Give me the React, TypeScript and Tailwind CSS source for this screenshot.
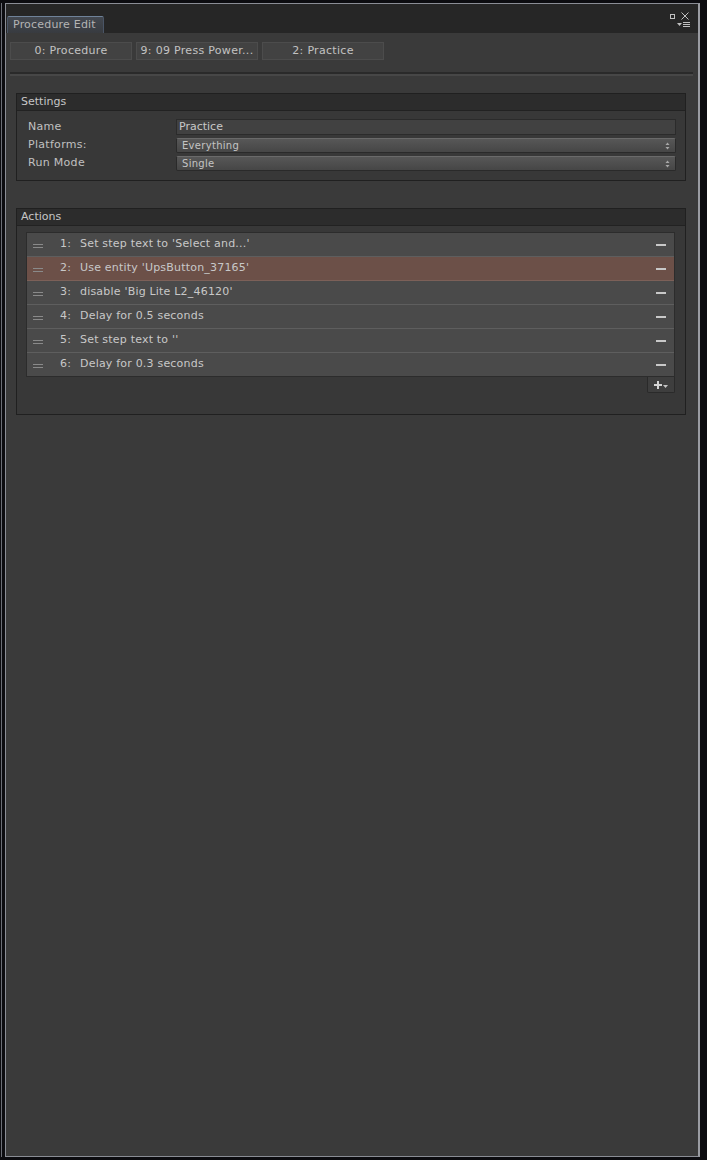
import React from 'react';

const ACTIONS = [
  "Set step text to 'Select and...'",
  "Use entity 'UpsButton_37165'",
  "disable 'Big Lite L2_46120'",
  'Delay for 0.5 seconds',
  "Set step text to ''",
  'Delay for 0.3 seconds',
];

const font = { fontFamily: '"DejaVu Sans", "Liberation Sans", sans-serif' };

function Spinner() {
  return (
    <svg width="5" height="8" viewBox="0 0 5 8" className="text-[#a8a8a8]">
      <path d="M0.5 3 L2.5 0.5 L4.5 3 Z" fill="currentColor" />
      <path d="M0.5 5 L2.5 7.5 L4.5 5 Z" fill="currentColor" />
    </svg>
  );
}

function Dropdown({ value }: { value: string }) {
  return (
    <div className="h-[15px] flex items-center justify-between pl-[5px] pr-[5px] rounded-[2px] border border-[#2a2a2a] border-t-[#6a6a6a] bg-gradient-to-b from-[#575757] to-[#464646] text-[10px] text-[#c4c4c4] tracking-[0.3px]">
      <span>{value}</span>
      <Spinner />
    </div>
  );
}

function DragHandle() {
  return (
    <div className="flex flex-col gap-[2px] w-[10px]">
      <div className="h-[1px] bg-[#8a8a8a]" />
      <div className="h-[1px] bg-[#8a8a8a]" />
    </div>
  );
}

export default function App() {
  return (
    <div className="w-[707px] h-[1160px] bg-[#0c0c10] pt-[3px] pl-[1px] pr-[7px] pb-[3px]" style={font}>
      <div className="h-full border-l border-[#6b6e76] pl-[3px]">
        <div className="h-full flex flex-col border border-[#8a8d95] border-r-2 border-r-[#9a9ca2]">
          {/* Title bar */}
          <div className="h-[29px] bg-[#262626] flex items-end justify-between relative shrink-0">
            <div className="ml-[1px] h-[17px] w-[97px] rounded-t-[2px] border-t border-x border-[#4a5566] border-t-[#6f8299] bg-gradient-to-b from-[#434850] to-[#383b40] flex items-center pl-[5px] text-[11px] text-[#b4b4b4] tracking-[0.2px]">
              Procedure Edit
            </div>
            <div className="absolute right-[9px] top-[8px] flex flex-col items-end gap-[2px]">
              <div className="flex items-center gap-[6px]">
                <div className="w-[5px] h-[5px] border border-[#c0c0c0]" />
                <svg width="8" height="8" viewBox="0 0 8 8">
                  <path d="M0.5 0.5 L7.5 7.5 M7.5 0.5 L0.5 7.5" stroke="#c0c0c0" strokeWidth="1" />
                </svg>
              </div>
              <div className="flex items-center gap-[1px] mr-[-1px]">
                <svg width="5" height="3" viewBox="0 0 5 3">
                  <path d="M0 0 L5 0 L2.5 3 Z" fill="#c0c0c0" />
                </svg>
                <div className="flex flex-col gap-[1px] w-[7px]">
                  <div className="h-[1px] bg-[#c0c0c0]" />
                  <div className="h-[1px] bg-[#c0c0c0]" />
                  <div className="h-[1px] bg-[#c0c0c0]" />
                </div>
              </div>
            </div>
          </div>

          {/* Content */}
          <div className="flex-1 bg-[#3a3a3a] flex flex-col">
            {/* Breadcrumb buttons */}
            <div className="flex gap-[4px] pl-[4px] pt-[9px]">
              {['0: Procedure', '9: 09 Press Power...', '2: Practice'].map((b) => (
                <div
                  key={b}
                  className="w-[122px] h-[18px] flex items-center justify-center bg-[#424242] border border-[#4c4c4c] text-[11px] text-[#c2c2c2] tracking-[0.3px]"
                >
                  {b}
                </div>
              ))}
            </div>

            {/* Separator */}
            <div className="ml-[4px] mr-[5px] mt-[12px]">
              <div className="h-[2px] bg-[#2a2a2a]" />
              <div className="h-[2px] bg-[#474747]" />
            </div>

            {/* Settings */}
            <div className="ml-[10px] mr-[12px] mt-[17px] border border-[#202020] bg-[#383838]">
              <div className="h-[17px] bg-[#2c2c2c] border-b border-[#222222] flex items-center pl-[4px] text-[11px] text-[#c6c6c6]">
                Settings
              </div>
              <div className="pt-[8px] pb-[9px] pl-[11px] pr-[9px] flex flex-col gap-[3px]">
                <div className="flex items-center h-[16px]">
                  <span className="w-[148px] text-[11px] text-[#c0c0c0] tracking-[0.3px]">Name</span>
                  <div className="flex-1 h-[16px] bg-[#414141] border border-[#2b2b2b] flex items-center pl-[2px] text-[11px] text-[#c8c8c8]">
                    Practice
                  </div>
                </div>
                <div className="flex items-center h-[15px]">
                  <span className="w-[148px] text-[11px] text-[#c0c0c0] tracking-[0.3px]">Platforms:</span>
                  <div className="flex-1">
                    <Dropdown value="Everything" />
                  </div>
                </div>
                <div className="flex items-center h-[15px]">
                  <span className="w-[148px] text-[11px] text-[#c0c0c0] tracking-[0.3px]">Run Mode</span>
                  <div className="flex-1">
                    <Dropdown value="Single" />
                  </div>
                </div>
              </div>
            </div>

            {/* Actions */}
            <div className="ml-[10px] mr-[12px] mt-[27px] border border-[#202020] bg-[#383838]">
              <div className="h-[17px] bg-[#2c2c2c] border-b border-[#222222] flex items-center pl-[4px] text-[11px] text-[#c6c6c6]">
                Actions
              </div>
              <div className="pl-[9px] pr-[10px] pt-[6px] pb-[21px]">
                <div className="border border-[#2c2c2c] bg-[#4a4a4a]">
                  {ACTIONS.map((a, i) => (
                    <div
                      key={i}
                      className={
                        'h-[24px] flex items-center border-b last:border-b-0 last:h-[23px] ' +
                        (i === 1
                          ? 'bg-[#6c5048] border-[#7c6058]'
                          : 'bg-[#4a4a4a] border-[#5e5e5e]')
                      }
                    >
                      <div className="pl-[6px] w-[33px] pt-[2px]">
                        <DragHandle />
                      </div>
                      <span className="w-[20px] text-[11px] text-[#c8c8c8] tracking-[0.3px]">{i + 1}:</span>
                      <span className="flex-1 text-[11px] text-[#c8c8c8] tracking-[0.2px]">{a}</span>
                      <div className="w-[10px] h-[2px] bg-[#c8c8c8] mr-[8px]" />
                    </div>
                  ))}
                </div>
                <div className="flex justify-end">
                  <div className="w-[28px] h-[16px] bg-[#3e3e3e] border-x border-b border-[#2a2a2a] rounded-b-[2px] flex items-center justify-center gap-[1px]">
                    <svg width="8" height="8" viewBox="0 0 8 8">
                      <path d="M4 0 V8 M0 4 H8" stroke="#d4d4d4" strokeWidth="2" />
                    </svg>
                    <svg width="5" height="3" viewBox="0 0 5 3" className="mt-[4px]">
                      <path d="M0 0 L5 0 L2.5 3 Z" fill="#c4c4c4" />
                    </svg>
                  </div>
                </div>
              </div>
            </div>
          </div>
        </div>
      </div>
    </div>
  );
}
